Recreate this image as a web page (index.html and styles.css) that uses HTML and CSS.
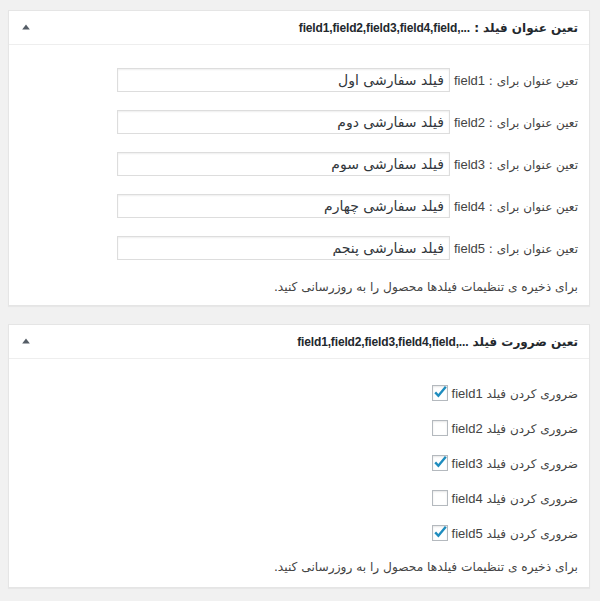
FILE: index.html
```html
<!DOCTYPE html>
<html lang="fa" dir="rtl">
<head>
<meta charset="utf-8">
<link rel="stylesheet" href="styles.css">
</head>
<body>
<div class="postbox">
  <div class="hndle">
    <h2 class="title">تعین عنوان فیلد : <bdi class="en" dir="ltr">field1,field2,field3,field4,field,...</bdi></h2>
    <svg class="toggle" width="8" height="6" viewBox="0 0 8 6"><path d="M4 0.5 L7.8 5.5 L0.2 5.5 Z" fill="#555d66"/></svg>
  </div>
  <div class="inside">
    <div class="rows">
      <div class="row"><span class="lbl">تعین عنوان برای : <span class="en">field1</span></span><input class="txt" type="text" value="فیلد سفارشی اول"></div>
      <div class="row"><span class="lbl">تعین عنوان برای : <span class="en">field2</span></span><input class="txt" type="text" value="فیلد سفارشی دوم"></div>
      <div class="row"><span class="lbl">تعین عنوان برای : <span class="en">field3</span></span><input class="txt" type="text" value="فیلد سفارشی سوم"></div>
      <div class="row"><span class="lbl">تعین عنوان برای : <span class="en">field4</span></span><input class="txt" type="text" value="فیلد سفارشی چهارم"></div>
      <div class="row"><span class="lbl">تعین عنوان برای : <span class="en">field5</span></span><input class="txt" type="text" value="فیلد سفارشی پنجم"></div>
    </div>
    <p class="note">برای ذخیره ی تنظیمات فیلدها محصول را به روزرسانی کنید.</p>
  </div>
</div>

<div class="postbox">
  <div class="hndle">
    <h2 class="title">تعین ضرورت فیلد <bdi class="en" dir="ltr">field1,field2,field3,field4,field,...</bdi></h2>
    <svg class="toggle" width="8" height="6" viewBox="0 0 8 6"><path d="M4 0.5 L7.8 5.5 L0.2 5.5 Z" fill="#555d66"/></svg>
  </div>
  <div class="inside inside-cb">
    <div class="checks">
      <label class="crow"><span class="lbl">ضروری کردن فیلد <span class="en">field1</span></span><span class="cb"><svg viewBox="0 0 16 16" width="16" height="16"><path d="M3.2 7.4 L6.4 10.8 L13.8 1.8" fill="none" stroke="#1e8cbe" stroke-width="2.4"/></svg></span></label>
      <label class="crow"><span class="lbl">ضروری کردن فیلد <span class="en">field2</span></span><span class="cb"></span></label>
      <label class="crow"><span class="lbl">ضروری کردن فیلد <span class="en">field3</span></span><span class="cb"><svg viewBox="0 0 16 16" width="16" height="16"><path d="M3.2 7.4 L6.4 10.8 L13.8 1.8" fill="none" stroke="#1e8cbe" stroke-width="2.4"/></svg></span></label>
      <label class="crow"><span class="lbl">ضروری کردن فیلد <span class="en">field4</span></span><span class="cb"></span></label>
      <label class="crow"><span class="lbl">ضروری کردن فیلد <span class="en">field5</span></span><span class="cb"><svg viewBox="0 0 16 16" width="16" height="16"><path d="M3.2 7.4 L6.4 10.8 L13.8 1.8" fill="none" stroke="#1e8cbe" stroke-width="2.4"/></svg></span></label>
    </div>
    <p class="note">برای ذخیره ی تنظیمات فیلدها محصول را به روزرسانی کنید.</p>
  </div>
</div>
</body>
</html>
```

FILE: styles.css
```css
html, body {
  margin: 0;
  padding: 0;
}
body {
  background: #f1f1f1;
  padding-top: 10px;
  font-family: "DejaVu Sans", "Liberation Sans", Arial, sans-serif;
  font-size: 12px;
  color: #444;
  direction: rtl;
}
.en {
  font-family: "Liberation Sans", Arial, sans-serif;
  font-size: 13px;
}
.postbox {
  background: #fff;
  border: 1px solid #e5e5e5;
  box-shadow: 0 1px 1px rgba(0, 0, 0, 0.04);
  margin: 0 10px 18px 8px;
}
.hndle {
  height: 33px;
  border-bottom: 1px solid #eee;
  display: flex;
  align-items: center;
  justify-content: space-between;
  padding: 0 11px 0 13px;
}
.title {
  margin: 0;
  font-size: 12px;
  font-weight: bold;
  color: #23282d;
}
.title .en {
  font-size: 12px;
  letter-spacing: -0.15px;
}
.toggle {
  display: block;
  margin-top: -2px;
}
.inside {
  padding: 23px 11px 8px 12px;
}
.rows {
  display: flex;
  flex-direction: column;
  gap: 18px;
}
.row {
  display: flex;
  align-items: center;
  gap: 4px;
  height: 24px;
}
.lbl {
  white-space: nowrap;
}
.txt {
  box-sizing: border-box;
  width: 333px;
  height: 24px;
  border: 1px solid #ddd;
  box-shadow: inset 0 1px 2px rgba(0, 0, 0, 0.07);
  padding: 0 5px;
  font-family: "DejaVu Sans", "Liberation Sans", Arial, sans-serif;
  font-size: 14px;
  color: #32373c;
  background: #fff;
  direction: rtl;
  outline: none;
}
.note {
  margin: 17px 0 0;
  line-height: 20px;
  font-size: 12.2px;
}
.inside-cb {
  padding-top: 26px;
  padding-bottom: 10px;
}
.checks {
  display: flex;
  flex-direction: column;
  gap: 19px;
}
.crow {
  display: flex;
  align-items: center;
  gap: 4px;
  height: 16px;
}
.cb {
  box-sizing: border-box;
  width: 16px;
  height: 16px;
  border: 1px solid #b4b9be;
  box-shadow: inset 0 1px 2px rgba(0, 0, 0, 0.1);
  background: #fff;
  position: relative;
}
.cb svg {
  position: absolute;
  top: -1px;
  left: -1px;
}
.inside-cb .note {
  margin-top: 16px;
}
```
